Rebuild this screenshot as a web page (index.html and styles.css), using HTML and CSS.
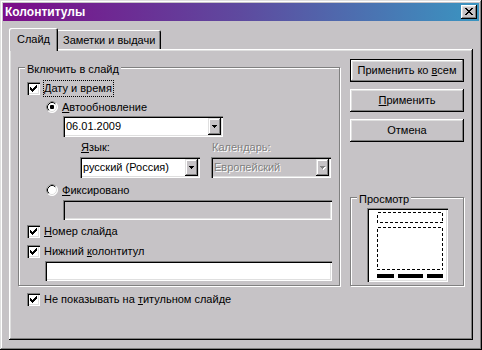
FILE: index.html
```html
<!DOCTYPE html>
<html>
<head>
<meta charset="utf-8">
<link rel="stylesheet" href="styles.css">
</head>
<body>
<div class="window">
  <div class="titlebar">
    <span class="title">Колонтитулы</span>
    <div class="close"><svg width="8" height="7" viewBox="0 0 8 7"><path d="M0 0h2v1H0z M6 0h2v1H6z M1 1h2v1H1z M5 1h2v1H5z M2 2h4v1H2z M3 3h2v1H3z M2 4h4v1H2z M1 5h2v1H1z M5 5h2v1H5z M0 6h2v1H0z M6 6h2v1H6z" fill="#000"/></svg></div>
  </div>
  <div class="content">
    <div class="tabs">
      <div class="tab active">Слайд</div>
      <div class="tab inactive">Заметки и выдачи</div>
    </div>
    <div class="panel">
      <div class="left">
        <div class="group main-group">
          <div class="legend">Включить в слайд</div>
          <div class="row chk-row">
            <span class="check"><svg width="13" height="13" viewBox="0 0 13 13"><path d="M3 5h1v3H3z M4 6h1v3H4z M5 7h1v3H5z M6 6h1v3H6z M7 5h1v3H7z M8 4h1v3H8z M9 3h1v3H9z" fill="#000"/></svg></span>
            <span class="lbl focus"><u>Д</u>ату и время</span>
          </div>
          <div class="row radio-row r-auto">
            <svg class="radio" width="12" height="12" viewBox="0 0 12 12"><circle cx="6" cy="6" r="5.5" fill="#fff" stroke="#fff"/><path d="M2.11 9.89A5.5 5.5 0 0 1 9.89 2.11" fill="none" stroke="#808080"/><path d="M9.18 2.82A4.5 4.5 0 0 1 2.82 9.18" fill="none" stroke="#dfdfdf"/><path d="M2.82 9.18A4.5 4.5 0 0 1 9.18 2.82" fill="none" stroke="#000"/><rect x="4" y="4" width="4" height="4" rx="1" fill="#000"/></svg>
            <span class="lbl"><u>А</u>втообновление</span>
          </div>
          <div class="combo date-combo">
            <span class="combo-text">06.01.2009</span>
            <span class="combo-btn"><svg width="5" height="3" viewBox="0 0 5 3"><path d="M0 0h5v1H0z M1 1h3v1H1z M2 2h1v1H2z" fill="#000"/></svg></span>
          </div>
          <div class="pair pair-labels">
            <span class="field-label"><u>Я</u>зык:</span>
            <span class="field-label disabled">Календарь:</span>
          </div>
          <div class="pair pair-combos">
            <div class="combo">
              <span class="combo-text">русский (Россия)</span>
              <span class="combo-btn"><svg width="5" height="3" viewBox="0 0 5 3"><path d="M0 0h5v1H0z M1 1h3v1H1z M2 2h1v1H2z" fill="#000"/></svg></span>
            </div>
            <div class="combo disabled">
              <span class="combo-text">Европейский</span>
              <span class="combo-btn"><svg width="6" height="4" viewBox="0 0 6 4"><path d="M1 1h5v1H1z M2 2h3v1H2z M3 3h1v1H3z" fill="#fff"/><path d="M0 0h5v1H0z M1 1h3v1H1z M2 2h1v1H2z" fill="#808080"/></svg></span>
            </div>
          </div>
          <div class="row radio-row r-fixed">
            <svg class="radio" width="12" height="12" viewBox="0 0 12 12"><circle cx="6" cy="6" r="5.5" fill="#fff" stroke="#fff"/><path d="M2.11 9.89A5.5 5.5 0 0 1 9.89 2.11" fill="none" stroke="#808080"/><path d="M9.18 2.82A4.5 4.5 0 0 1 2.82 9.18" fill="none" stroke="#dfdfdf"/><path d="M2.82 9.18A4.5 4.5 0 0 1 9.18 2.82" fill="none" stroke="#000"/></svg>
            <span class="lbl"><u>Ф</u>иксировано</span>
          </div>
          <div class="input disabled fixed-input"></div>
          <div class="row chk-row r-num">
            <span class="check"><svg width="13" height="13" viewBox="0 0 13 13"><path d="M3 5h1v3H3z M4 6h1v3H4z M5 7h1v3H5z M6 6h1v3H6z M7 5h1v3H7z M8 4h1v3H8z M9 3h1v3H9z" fill="#000"/></svg></span>
            <span class="lbl"><u>Н</u>омер слайда</span>
          </div>
          <div class="row chk-row r-foot">
            <span class="check"><svg width="13" height="13" viewBox="0 0 13 13"><path d="M3 5h1v3H3z M4 6h1v3H4z M5 7h1v3H5z M6 6h1v3H6z M7 5h1v3H7z M8 4h1v3H8z M9 3h1v3H9z" fill="#000"/></svg></span>
            <span class="lbl">Нижний <u>к</u>олонтитул</span>
          </div>
          <div class="input footer-input"></div>
        </div>
        <div class="row chk-row bottom-chk">
          <span class="check"><svg width="13" height="13" viewBox="0 0 13 13"><path d="M3 5h1v3H3z M4 6h1v3H4z M5 7h1v3H5z M6 6h1v3H6z M7 5h1v3H7z M8 4h1v3H8z M9 3h1v3H9z" fill="#000"/></svg></span>
          <span class="lbl">Не показывать на <u>т</u>итульном слайде</span>
        </div>
      </div>
      <div class="right">
        <div class="btn default"><span>Применить ко <u>в</u>сем</span></div>
        <div class="btn"><span><u>П</u>рименить</span></div>
        <div class="btn"><span>Отмена</span></div>
        <div class="group preview-group">
          <div class="legend">Просмотр</div>
          <div class="preview">
            <svg width="77" height="70" viewBox="0 0 77 70">
              <rect x="8.5" y="2.5" width="65" height="10" fill="none" stroke="#000" stroke-dasharray="3 2"/>
              <rect x="8.5" y="17.5" width="65" height="42" fill="none" stroke="#000" stroke-dasharray="3 2"/>
              <rect x="8" y="64" width="17" height="4" fill="#000"/>
              <rect x="29" y="64" width="25" height="4" fill="#000"/>
              <rect x="58" y="64" width="16" height="4" fill="#000"/>
            </svg>
          </div>
        </div>
      </div>
    </div>
  </div>
</div>
</body>
</html>
```
FILE: styles.css
```css
* { box-sizing: border-box; }
html, body { margin: 0; padding: 0; }
body {
  width: 482px;
  height: 350px;
  overflow: hidden;
  background: #c6c3c6;
  font-family: "Liberation Sans", Arial, sans-serif;
  font-size: 11px;
  color: #000;
}
u { text-decoration: underline; text-underline-offset: 1px; }
.window {
  width: 482px;
  height: 350px;
  padding: 3px;
  background: #c6c3c6;
  box-shadow: inset -1px -1px #000, inset 1px 1px #dfdfdf, inset -2px -2px #808080, inset 2px 2px #fff;
}
.titlebar {
  height: 18px;
  display: flex;
  align-items: center;
  padding: 0 2px;
  background: linear-gradient(90deg, #7c0c88 0%, #5e4a9f 50%, #3a95c1 100%);
  color: #fff;
  font-weight: bold;
  font-size: 12px;
  line-height: 18px;
}
.title { flex: 1; }
.close {
  width: 16px;
  height: 14px;
  padding: 3px 0 0 4px;
  background: #c6c3c6;
  box-shadow: inset -1px -1px #000, inset 1px 1px #fff, inset -2px -2px #808080, inset 2px 2px #dfdfdf;
}
.close svg { display: block; }
.content { padding: 7px 6px 0; }
.tabs {
  display: flex;
  align-items: flex-end;
  height: 21px;
}
.tab {
  height: 19px;
  padding: 4px 6px 0 7px;
  line-height: 13px;
  background: #c6c3c6;
  border-radius: 2px 2px 0 0;
  box-shadow: inset 1px 1px #fff, inset -1px 0 #000, inset -2px 0 #808080;
}
.tab.active {
  height: 23px;
  margin-bottom: -2px;
  padding: 5px 8px 0;
  position: relative;
  z-index: 1;
}
.tab.inactive { margin-left: -2px; }
.panel {
  height: 291px;
  padding: 10px 9px 0;
  display: grid;
  grid-template-columns: 322px 114px;
  column-gap: 10px;
  align-items: start;
  background: #c6c3c6;
  box-shadow: inset -1px -1px #000, inset 1px 1px #fff, inset -2px -2px #808080, inset 2px 2px #dfdfdf;
}
.left { padding-top: 8px; }
.group {
  position: relative;
  border: 1px solid #808080;
  box-shadow: inset 1px 1px #fff, 1px 1px #fff;
}
.main-group { padding: 12px 0 4px 8px; }
.legend {
  position: absolute;
  top: -5px;
  left: 6px;
  padding: 0 2px;
  line-height: 13px;
  background: #c6c3c6;
}
.row { display: flex; align-items: center; }
.chk-row { height: 17px; }
.radio-row { height: 16px; margin-left: 19px; }
.check {
  width: 13px;
  height: 13px;
  flex: none;
  background: #fff;
  box-shadow: inset 1px 1px #808080, inset 2px 2px #000, inset -1px -1px #fff, inset -2px -2px #dfdfdf;
}
.check svg, .radio { display: block; flex: none; }
.lbl {
  margin-left: 3px;
  padding: 0 1px 0 0;
  border: 1px solid transparent;
  line-height: 15px;
  white-space: nowrap;
}
.lbl.focus { border: 1px dotted #000; }
.r-auto { margin-top: 2px; }
.combo {
  display: flex;
  height: 21px;
  padding: 2px;
  background: #fff;
  box-shadow: inset 1px 1px #808080, inset 2px 2px #000, inset -1px -1px #fff, inset -2px -2px #dfdfdf;
}
.combo-text {
  flex: 1;
  padding-left: 1px;
  line-height: 17px;
  white-space: nowrap;
  overflow: hidden;
}
.combo-btn {
  width: 13px;
  height: 17px;
  flex: none;
  display: flex;
  align-items: center;
  justify-content: center;
  background: #c6c3c6;
  box-shadow: inset -1px -1px #000, inset 1px 1px #dfdfdf, inset -2px -2px #808080, inset 2px 2px #fff;
}
.combo-btn svg { display: block; }
.combo.disabled { background: #c6c3c6; }
.combo.disabled .combo-text, .field-label.disabled {
  color: #808080;
  text-shadow: 1px 1px 0 #fff;
}
.date-combo { width: 160px; margin: 1px 0 0 36px; }
.pair {
  display: grid;
  grid-template-columns: 120px 120px;
  column-gap: 11px;
  margin-left: 53px;
}
.pair-labels { height: 14px; margin-top: 3px; line-height: 14px; }
.field-label { padding-left: 1px; white-space: nowrap; }
.pair-combos { margin-top: 3px; }
.r-fixed { margin-top: 4px; }
.input {
  height: 20px;
  background: #fff;
  box-shadow: inset 1px 1px #808080, inset 2px 2px #000, inset -1px -1px #fff, inset -2px -2px #dfdfdf;
}
.input.disabled { background: #c6c3c6; }
.fixed-input { width: 269px; margin: 2px 0 0 36px; }
.r-num { margin-top: 3px; }
.r-foot { margin-top: 3px; }
.footer-input { width: 287px; margin: 1px 0 0 18px; }
.bottom-chk { margin-top: 5px; padding-left: 9px; }
.right { display: flex; flex-direction: column; }
.btn {
  height: 23px;
  display: flex;
  align-items: center;
  justify-content: center;
  line-height: 13px;
  white-space: nowrap;
  background: #c6c3c6;
  box-shadow: inset -1px -1px #000, inset 1px 1px #fff, inset -2px -2px #808080, inset 2px 2px #dfdfdf;
}
.btn + .btn { margin-top: 7px; }
.btn.default {
  box-shadow: inset 0 0 0 1px #000, inset -2px -2px #808080, inset 2px 2px #fff, inset -3px -3px #c6c3c6, inset 3px 3px #dfdfdf;
}
.preview-group {
  margin-top: 55px;
  padding: 10px 0 3px;
  display: flex;
  justify-content: center;
}
.preview {
  width: 81px;
  height: 74px;
  padding: 2px;
  background: #fff;
  box-shadow: inset 1px 1px #808080, inset 2px 2px #000, inset -1px -1px #fff, inset -2px -2px #dfdfdf;
}
.preview svg { display: block; shape-rendering: crispEdges; }
```
